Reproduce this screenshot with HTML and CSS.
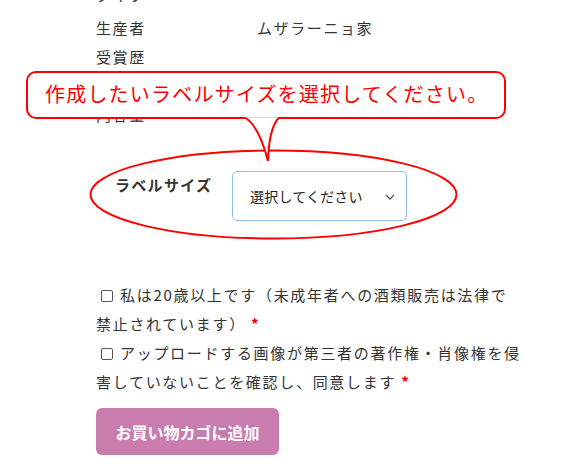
FILE: index.html
```html
<!DOCTYPE html>
<html lang="ja">
<head>
<meta charset="utf-8">
<link rel="stylesheet" href="styles.css">
</head>
<body>
<div class="page">
  <div class="specs">
    <div class="spec-row spec-first"><span class="spec-key">タイプ</span><span class="spec-val"></span></div>
    <div class="spec-row"><span class="spec-key">生産者</span><span class="spec-val">ムザラーニョ家</span></div>
    <div class="spec-row"><span class="spec-key">受賞歴</span><span class="spec-val"></span></div>
    <div class="spec-row"><span class="spec-key">品種</span><span class="spec-val"></span></div>
    <div class="spec-row"><span class="spec-key">内容量</span><span class="spec-val"></span></div>
  </div>

  <div class="option-row">
    <div class="option-label">ラベルサイズ</div>
    <div class="select">
      <span class="select-text">選択してください</span>
      <svg class="chev" width="10" height="6" viewBox="0 0 10 6"><path d="M1 1 L5 5 L9 1" fill="none" stroke="#555" stroke-width="1.3"/></svg>
    </div>
  </div>

  <div class="agree">
    <p class="agree-line"><span class="box"></span>私は20歳以上です（未成年者への酒類販売は法律で<br>禁止されています） <span class="req">*</span></p>
    <p class="agree-line"><span class="box"></span>アップロードする画像が第三者の著作権・肖像権を侵<br>害していないことを確認し、同意します <span class="req">*</span></p>
  </div>

  <button class="cart">お買い物カゴに追加</button>

  <div class="bubble">作成したいラベルサイズを選択してください。</div>
  <svg class="marks" width="561" height="473" viewBox="0 0 561 473">
    <ellipse cx="273.5" cy="194.5" rx="183" ry="44" fill="none" stroke="#f00" stroke-width="2"/>
    <path d="M245 117.5 Q259 126 268 161 Q269 128 279 117.5" fill="#fff" stroke="#f00" stroke-width="2" stroke-linejoin="miter"/>
    <rect x="246" y="116" width="32" height="1.6" fill="#fff"/>
  </svg>
</div>
</body>
</html>
```

FILE: styles.css
```css
html, body {
  margin: 0;
  padding: 0;
  background: #fff;
}

body {
  font-family: "Noto Sans CJK JP", "Noto Sans", sans-serif;
  color: #333;
  overflow: hidden;
}

.page {
  position: relative;
  width: 561px;
  height: 473px;
  overflow: hidden;
}

.specs {
  margin-top: -16px;
  padding-left: 96px;
  font-size: 15px;
  letter-spacing: 1.6px;
  line-height: 29px;
}

.spec-row {
  display: grid;
  grid-template-columns: 161px auto;
  height: 29px;
}

.spec-first .spec-key {
  position: relative;
  top: -4px;
}

.option-row {
  display: flex;
  margin-top: 42px;
  padding-left: 115px;
}

.option-label {
  width: 117px;
  font-size: 15px;
  font-weight: bold;
  letter-spacing: 1.3px;
  line-height: 22px;
  padding-top: 3px;
  color: #333;
}

.select {
  box-sizing: border-box;
  width: 175px;
  height: 50px;
  border: 1px solid #8dbde3;
  border-radius: 5px;
  display: flex;
  align-items: center;
  justify-content: space-between;
  padding: 0 11px 0 17px;
  font-size: 14px;
  color: #222;
}

.select-text {
  line-height: 20px;
  letter-spacing: 0.2px;
}

.chev {
  display: block;
  margin-top: 1px;
}

.agree {
  margin-top: 59px;
  padding-left: 96px;
  width: 440px;
  font-size: 15px;
  letter-spacing: 1.7px;
  line-height: 29px;
  white-space: nowrap;
}

.agree-line {
  margin: 0;
}

.box {
  display: inline-block;
  box-sizing: border-box;
  width: 12px;
  height: 12px;
  border: 1px solid #555;
  border-radius: 2px;
  margin: 0 7px 0 5px;
  vertical-align: -1px;
}

.req {
  color: #e00;
  font-weight: bold;
}

.cart {
  display: block;
  margin: 12px 0 0 96px;
  width: 183px;
  height: 47px;
  border: none;
  border-radius: 6px;
  background: #c97cae;
  color: #fff;
  font-family: "Noto Sans CJK JP", "Noto Sans", sans-serif;
  font-size: 16px;
  font-weight: bold;
  padding: 0;
}

.bubble {
  position: absolute;
  left: 26px;
  top: 71px;
  box-sizing: border-box;
  width: 480px;
  height: 48px;
  border: 2px solid #f00;
  border-radius: 10px;
  background: #fff;
  color: #f00;
  font-size: 20px;
  letter-spacing: 1.2px;
  line-height: 42px;
  padding-left: 17px;
  white-space: nowrap;
}

.marks {
  position: absolute;
  left: 0;
  top: 0;
  pointer-events: none;
}
```
